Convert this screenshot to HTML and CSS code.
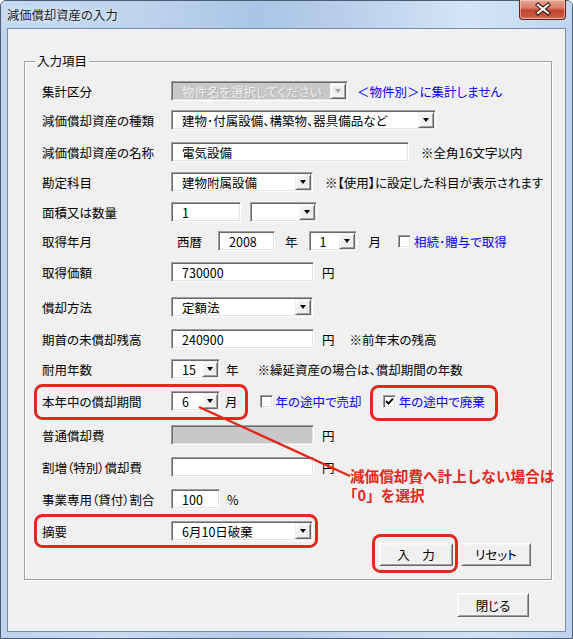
FILE: index.html
```html
<!DOCTYPE html>
<html lang="ja">
<head>
<meta charset="utf-8">
<title>減価償却資産の入力</title>
<link rel="stylesheet" href="styles.css">
</head>
<body>
<div class="window">
  <div class="titlebar">
    <span class="title">減価償却資産の入力</span>
    <div class="close">
      <svg width="47" height="20" viewBox="0 0 47 20">
        <path d="M19 6 L29 14 M29 6 L19 14" stroke="#3d1410" stroke-width="4.2" stroke-linecap="square"/>
        <path d="M19 6 L29 14 M29 6 L19 14" stroke="#ffffff" stroke-width="2.2" stroke-linecap="square"/>
      </svg>
    </div>
  </div>
  <div class="client">
    <fieldset class="group">
      <legend>入力項目</legend>
      <div class="form">
        <div class="lbl">集計区分</div>
        <div class="ctrl">
          <div class="combo disabled w177"><span class="val">物件名を選択してください</span><span class="dd"><i></i></span></div>
          <span class="link ml9">＜物件別＞に集計しません</span>
        </div>

        <div class="lbl">減価償却資産の種類</div>
        <div class="ctrl">
          <div class="combo w265"><span class="val">建物･付属設備、構築物、器具備品など</span><span class="dd"><i></i></span></div>
        </div>

        <div class="lbl">減価償却資産の名称</div>
        <div class="ctrl">
          <div class="field w238">電気設備</div>
          <span class="ml12">※全角16文字以内</span>
        </div>

        <div class="lbl">勘定科目</div>
        <div class="ctrl">
          <div class="combo w142"><span class="val">建物附属設備</span><span class="dd"><i></i></span></div>
          <span class="ml12">※【使用】に設定した科目が表示されます</span>
        </div>

        <div class="lbl">面積又は数量</div>
        <div class="ctrl">
          <div class="field w70">1</div>
          <div class="combo w67 ml9"><span class="val"></span><span class="dd"><i></i></span></div>
        </div>

        <div class="lbl">取得年月</div>
        <div class="ctrl">
          <span class="ml6">西暦</span>
          <div class="field w57 ml16">2008</div>
          <span class="ml10">年</span>
          <div class="combo w48 ml11"><span class="val">1</span><span class="dd"><i></i></span></div>
          <span class="ml12">月</span>
          <span class="cb ml17"></span>
          <span class="link ml3">相続･贈与で取得</span>
        </div>

        <div class="lbl">取得価額</div>
        <div class="ctrl">
          <div class="field w143">730000</div>
          <span class="ml8">円</span>
        </div>

        <div class="lbl">償却方法</div>
        <div class="ctrl">
          <div class="combo w142"><span class="val">定額法</span><span class="dd"><i></i></span></div>
        </div>

        <div class="lbl">期首の未償却残高</div>
        <div class="ctrl">
          <div class="field w143">240900</div>
          <span class="ml8">円</span>
          <span class="ml15">※前年末の残高</span>
        </div>

        <div class="lbl">耐用年数</div>
        <div class="ctrl">
          <div class="combo w49"><span class="val">15</span><span class="dd"><i></i></span></div>
          <span class="ml6">年</span>
          <span class="ml19">※繰延資産の場合は、償却期間の年数</span>
        </div>

        <div class="lbl">本年中の償却期間</div>
        <div class="ctrl">
          <div class="combo w49"><span class="val">6</span><span class="dd"><i></i></span></div>
          <span class="ml5">月</span>
          <span class="cb ml22"></span>
          <span class="link ml3">年の途中で売却</span>
          <span class="cb checked ml21"><svg width="11" height="11" viewBox="0 0 11 11"><path d="M2 5.2 L4.4 7.6 L9 2.6" fill="none" stroke="#000" stroke-width="1.9"/></svg></span>
          <span class="link ml3">年の途中で廃棄</span>
        </div>

        <div class="lbl">普通償却費</div>
        <div class="ctrl">
          <div class="field gray w143"></div>
          <span class="ml8">円</span>
        </div>

        <div class="lbl">割増（特別）償却費</div>
        <div class="ctrl">
          <div class="field w143"></div>
          <span class="ml8">円</span>
        </div>

        <div class="lbl">事業専用（貸付）割合</div>
        <div class="ctrl">
          <div class="field w49">100</div>
          <span class="ml7">%</span>
        </div>

        <div class="lbl">摘要</div>
        <div class="ctrl">
          <div class="combo w142"><span class="val">6月10日破棄</span><span class="dd"><i></i></span></div>
        </div>
      </div>
      <div class="actions">
        <button class="btn w74">入　力</button>
        <button class="btn w70">リセット</button>
      </div>
    </fieldset>
    <div class="footer">
      <button class="btn w72 tall">閉じる</button>
    </div>
  </div>

  <svg class="marks" width="573" height="639" viewBox="0 0 573 639">
    <g fill="none" stroke="#e3281d" stroke-width="3">
      <rect x="35.5" y="385.5" width="211" height="33" rx="7"/>
      <rect x="371.5" y="386.5" width="125" height="33" rx="7"/>
      <rect x="35.5" y="515.5" width="281" height="31" rx="7"/>
      <rect x="373.5" y="535.5" width="83" height="36" rx="7"/>
    </g>
    <line x1="199" y1="407" x2="350" y2="476" stroke="#e3281d" stroke-width="2.4"/>
  </svg>
  <div class="callout">減価償却費へ計上しない場合は<span class="callout-2">「0」を選択</span></div>
</div>
</body>
</html>
```

FILE: styles.css
```css
* { box-sizing: border-box; }

html, body {
  margin: 0;
  padding: 0;
}

body {
  width: 573px;
  height: 639px;
  overflow: hidden;
  background: #ffffff;
  font-family: "Noto Sans CJK JP", "Noto Sans", sans-serif;
  font-size: 12.5px;
  color: #000;
  font-feature-settings: "palt";
}

.window {
  position: relative;
  width: 573px;
  height: 639px;
  display: flex;
  flex-direction: column;
  border: 1px solid #4b5d71;
  border-radius: 6px 6px 0 0;
  background: linear-gradient(90deg, #bcd4ee 0%, #c8dcf2 20%, #b2cbe8 45%, #c2d7ef 60%, #cfe2f6 85%, #bcd4ee 100%);
}

.titlebar {
  height: 27px;
  display: flex;
  justify-content: space-between;
  align-items: flex-start;
  padding: 0 6px;
  border-radius: 5px 5px 0 0;
  background: linear-gradient(90deg, #c4d9f1 0%, #bdd4ee 25%, #a9c4e5 45%, #b8cfeb 60%, #d4e5f7 82%, #bed6f0 100%);
}

.title {
  font-size: 12.3px;
  line-height: 28px;
  color: #1a1a1a;
  font-feature-settings: normal;
  text-shadow: 0 0 6px #e8f2fc, 0 0 3px #e8f2fc;
}

.close {
  width: 47px;
  height: 20px;
  margin-top: -1px;
  border: 1px solid #5b2420;
  border-top: none;
  border-radius: 0 0 4px 4px;
  background: linear-gradient(180deg, #e9a594 0%, #d9806b 40%, #c4442e 55%, #c9553d 85%, #d9826c 100%);
  box-shadow: inset 0 0 0 1px rgba(255, 220, 210, 0.5);
  overflow: hidden;
}

.close svg { display: block; margin: -1px 0 0 -1px; }

.client {
  flex: 1;
  margin: 0 6px 6px 6px;
  border: 1px solid #7a8ca1;
  background: #f0f0f0;
}

.group {
  margin: 25px 13px 0 16px;
  padding: 13px 20px 13px 17px;
  min-width: 0;
  border: 1px solid #a0a0a0;
  box-shadow: inset 1px 1px 0 #fff, 1px 1px 0 #fff;
}

.group legend {
  padding: 0 2px;
  margin-left: -7px;
  line-height: 14px;
}

.form {
  display: grid;
  grid-template-columns: 129px auto;
  grid-template-rows: 29px 32px 30px 30px 29px 31px 35px 32px 30px 32px 34px 32px 32px 32px 20px;
}

.lbl, .ctrl {
  height: 20px;
  display: flex;
  align-items: center;
  white-space: nowrap;
}

.field, .combo {
  height: 20px;
  display: flex;
  align-items: center;
  padding-left: 10px;
  background: #fff;
  border: 1px solid;
  border-color: #a0a0a0 #fff #fff #a0a0a0;
  box-shadow: inset 1px 1px 0 #696969, inset -1px -1px 0 #e3e3e3;
  white-space: nowrap;
  overflow: hidden;
}

.field.gray { background: #c8c8c8; }

.combo { padding-right: 1px; }

.combo .val { flex: 1; overflow: hidden; }

.dd {
  width: 16px;
  height: 16px;
  flex: none;
  display: flex;
  align-items: center;
  justify-content: center;
  background: #f0f0f0;
  border: 1px solid;
  border-color: #f0f0f0 #696969 #696969 #f0f0f0;
  box-shadow: inset 1px 1px 0 #fff, inset -1px -1px 0 #a0a0a0;
}

.dd i {
  display: block;
  width: 1px;
  height: 0;
  border-left: 3px solid transparent;
  border-right: 3px solid transparent;
  border-top: 4px solid #000;
}

.combo.disabled {
  background: #c8c8c8;
  color: #eeeeee;
  text-shadow: 1px 1px 0 #b0b0b0;
}

.combo.disabled .dd i { border-top-color: #a0a0a0; }

.link { color: #0000f0; }

.cb {
  width: 13px;
  height: 13px;
  flex: none;
  display: flex;
  align-items: center;
  justify-content: center;
  background: #fff;
  border: 1px solid;
  border-color: #a0a0a0 #fff #fff #a0a0a0;
  box-shadow: inset 1px 1px 0 #696969, inset -1px -1px 0 #e3e3e3;
}

.cb svg { display: block; }

.actions {
  display: flex;
  justify-content: flex-end;
  gap: 8px;
  margin-top: 2px;
}

.footer {
  display: flex;
  justify-content: flex-end;
  margin: 13px 36px 0 0;
}

.btn {
  height: 23px;
  padding: 0;
  font: inherit;
  color: #000;
  background: #f0f0f0;
  border: 1px solid;
  border-color: #fff #696969 #696969 #fff;
  box-shadow: inset 1px 1px 0 #f7f7f7, inset -1px -1px 0 #a0a0a0;
}

.btn.tall { height: 24px; }

.w48 { width: 48px; }
.w49 { width: 49px; }
.w57 { width: 57px; }
.w67 { width: 67px; }
.w70 { width: 70px; }
.w72 { width: 72px; }
.w74 { width: 74px; }
.w142 { width: 142px; }
.w143 { width: 143px; }
.w177 { width: 177px; }
.w238 { width: 238px; }
.w265 { width: 265px; }

.ml3 { margin-left: 3px; }
.ml5 { margin-left: 5px; }
.ml6 { margin-left: 6px; }
.ml7 { margin-left: 7px; }
.ml8 { margin-left: 8px; }
.ml9 { margin-left: 9px; }
.ml10 { margin-left: 10px; }
.ml11 { margin-left: 11px; }
.ml12 { margin-left: 12px; }
.ml15 { margin-left: 15px; }
.ml16 { margin-left: 16px; }
.ml17 { margin-left: 17px; }
.ml19 { margin-left: 19px; }
.ml21 { margin-left: 21px; }
.ml22 { margin-left: 22px; }

.marks {
  position: absolute;
  left: -1px;
  top: -1px;
  pointer-events: none;
}

.callout {
  position: absolute;
  left: 349px;
  top: 465px;
  font-size: 14.6px;
  font-weight: bold;
  line-height: 19px;
  color: #e3281d;
  white-space: nowrap;
  font-feature-settings: normal;
}

.callout-2 {
  display: block;
  margin-left: -7px;
}
```
